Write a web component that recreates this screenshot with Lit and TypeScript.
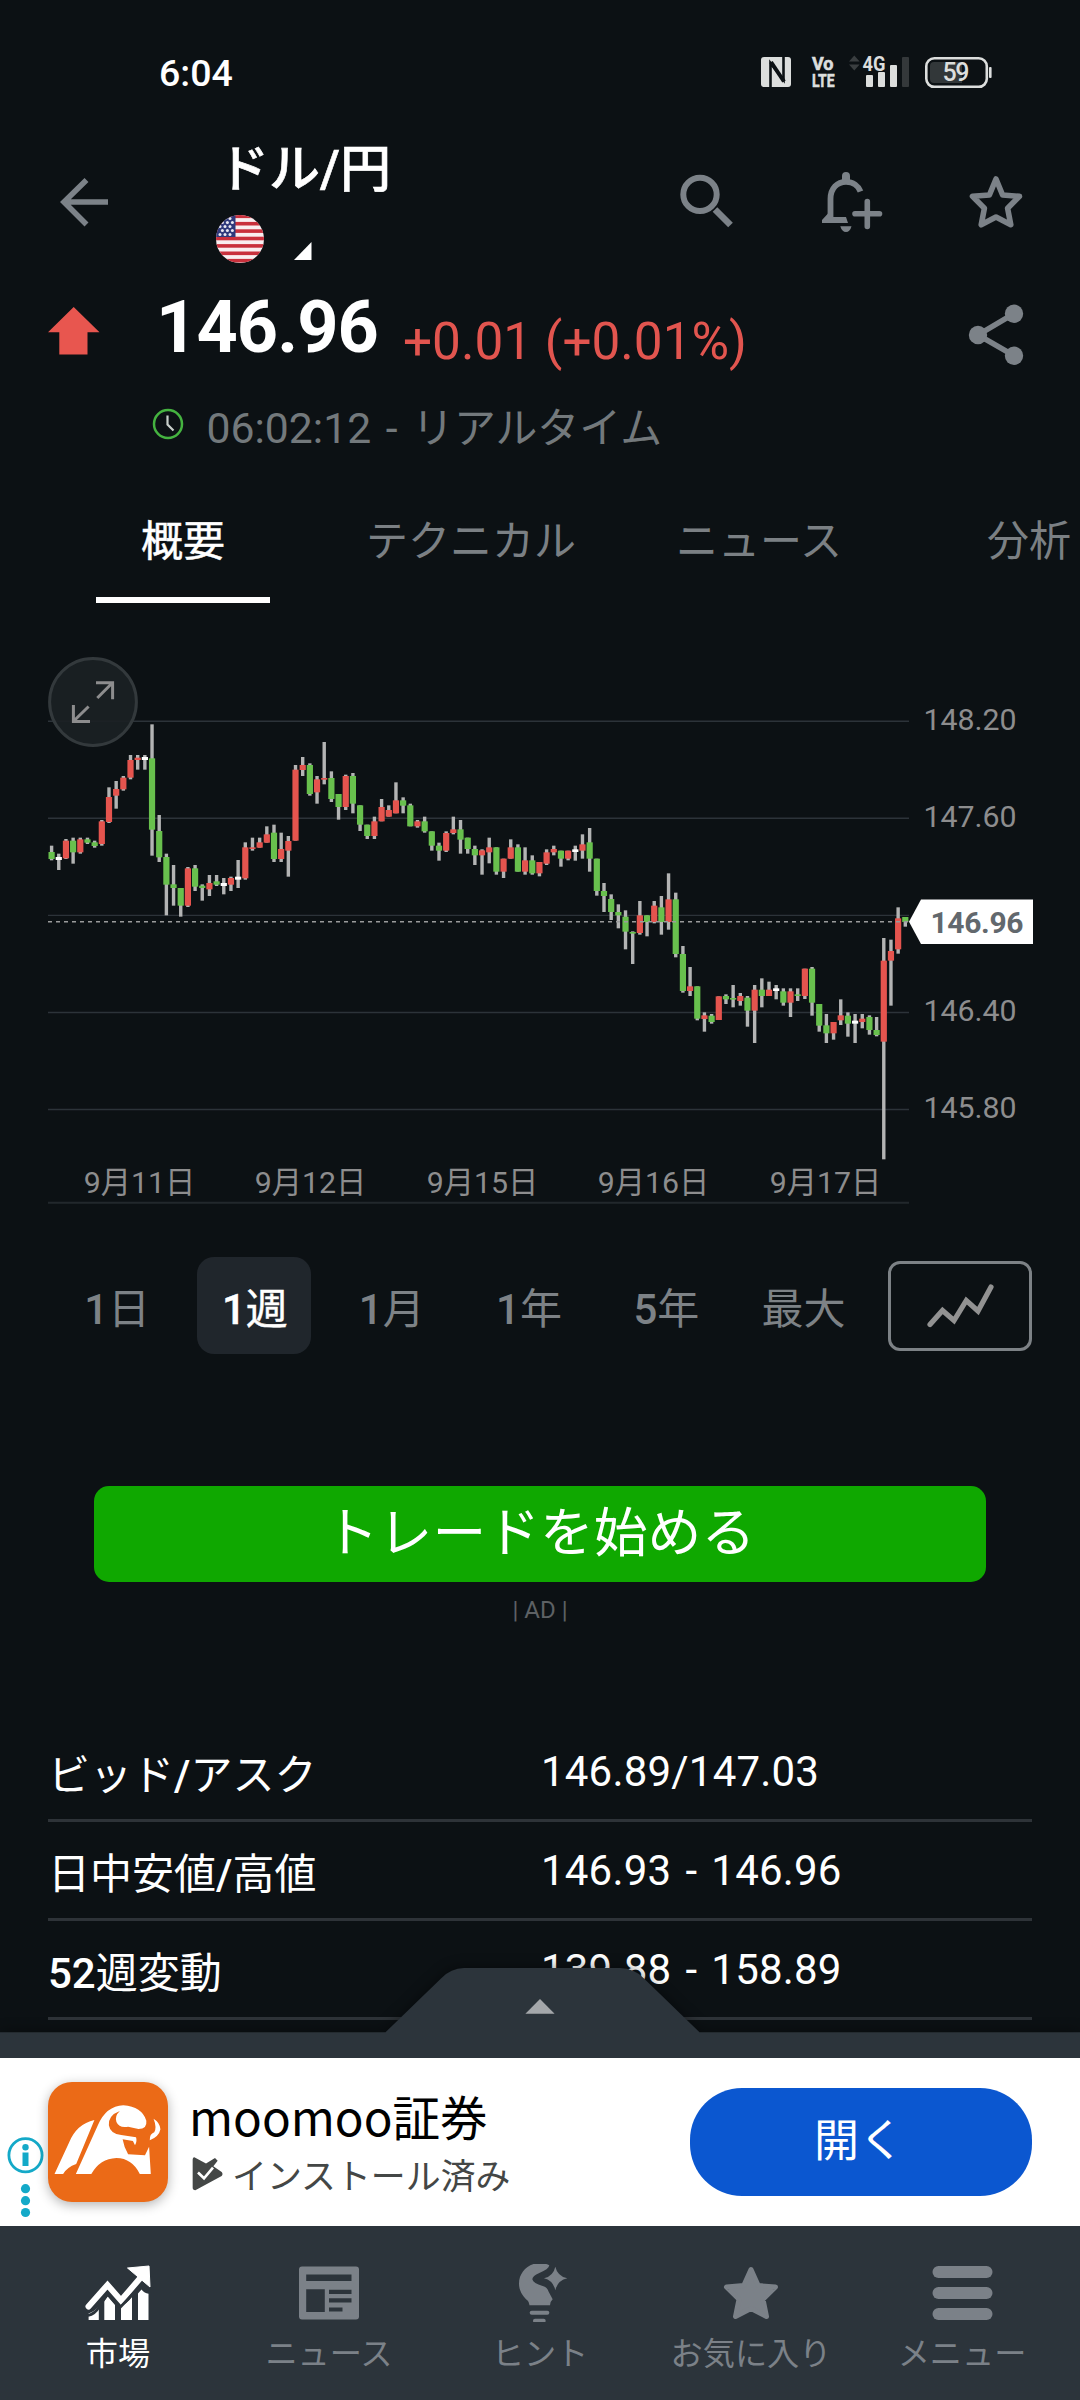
import { LitElement, html, svg, css } from "lit";
import { customElement } from "lit/decorators.js";
import { classMap } from "lit/directives/class-map.js";

type Kind = "u" | "d" | "n";

// Each candle: high, open/close top, open/close bottom, low, kind.
// Levels are in thirds of a pixel below the session's base line.
const SESSIONS: { base: number; data: string }[] = [
  {
    base: 640,
    data: `617,636,657,661,d 641,651,660,690,n 597,602,655,657,u 593,602,637,671,d 593,598,637,641,u
593,598,608,612,d 602,607,618,623,d 540,544,612,617,u 442,471,546,549,u 423,447,467,506,u
408,413,448,452,u 345,360,413,418,u 345,353,360,389,u 345,351,360,389,n 253,355,569,647,d
525,573,652,666,d 641,651,734,826,d 675,733,744,797,d 744,744,797,830,d 681,685,797,801,u
675,685,740,753,d 733,737,744,782,d 705,729,748,768,u 705,724,734,738,d 714,729,738,763,n
710,714,734,753,u 660,710,719,744,n 607,622,715,719,u 593,622,626,632,u 593,607,623,623,u
559,583,608,608,u 554,578,657,666,d 578,627,657,666,u 588,603,632,710,u 375,389,602,602,u`,
  },
  {
    base: 720,
    data: `111,135,150,168,u 130,135,222,227,d 168,178,217,251,u 66,174,179,193,u 154,174,237,246,d
222,222,261,299,d 164,168,261,270,u 159,168,251,280,d 256,256,314,333,d 314,314,348,357,d
290,304,348,357,u 237,261,304,304,u 256,270,290,290,u 187,241,280,280,u 232,241,257,280,d
251,256,319,319,d 300,304,319,323,u 290,304,334,338,d 334,334,377,392,d 368,377,392,422,d
334,339,392,396,u 290,328,339,343,u 300,328,359,401,d 353,353,387,401,d 377,387,406,435,d
388,391,406,464,u 353,382,397,430,u 382,382,455,464,d 416,416,455,474,u 358,382,416,416,u
373,382,455,455,d 382,421,455,464,u 406,421,460,464,d 426,426,460,469,u 388,397,431,435,u
377,387,397,406,u 392,392,416,440,d 392,392,416,421,u 377,388,396,422,n 343,373,392,416,u
324,367,416,455,d 416,416,513,527,d`,
  },
  {
    base: 780,
    data: `309,333,348,396,d 343,357,396,420,d 373,396,406,445,d 391,410,455,508,d 454,456,460,552,d
363,406,459,464,u 406,406,426,469,d 363,377,426,430,u 348,382,426,464,d 280,358,426,449,u
338,358,522,532,d 498,522,633,638,d 561,619,633,648,u 619,619,716,721,d 697,706,717,755,u
702,707,726,731,d 649,649,720,720,u 643,648,658,672,d 615,654,658,682,d 639,648,663,677,u
648,653,692,740,d 615,629,692,789,u 595,629,648,682,d 605,629,648,648,u 615,625,633,658,n
625,634,668,677,d 625,634,668,711,u 625,643,648,663,d 566,566,648,657,u 561,566,668,707,d
672,672,737,755,d 702,736,760,789,d 726,726,760,779,u 658,706,721,735,u 697,707,731,770,d
702,722,731,789,n 702,716,726,745,u 706,711,750,764,d 711,750,765,769,d 474,542,785,1138,u
479,513,542,677,u 382,415,508,521,u 411,411,426,440,d`,
  },
];

interface Candle { high: number; top: number; bottom: number; low: number; kind: Kind }

const CANDLES: Candle[] = SESSIONS.flatMap(({ base, data }) =>
  data.trim().split(/\s+/).map((row) => {
    const p = row.split(",");
    const [high, top, bottom, low] = p.slice(0, 4).map((v) => base + Number(v) / 3);
    return { high, top, bottom, low, kind: p[4] as Kind };
  })
);

const FIRST_X = 51.6;
const STEP = 7.174;
const FILL: Record<Kind, string> = { u: "#e5544e", d: "#68c04d", n: "#ffffff" };

@customElement("price-chart")
export class PriceChart extends LitElement {
  static styles = css`
    :host { display: block; }
    .chart { display: block; width: 1080px; height: 617px; font-family: Roboto, "Noto Sans CJK JP", sans-serif; }
    .axis { font-size: 30.3px; fill: #8d8d8e; }
    .now { font-size: 30px; font-weight: 700; fill: #62686d; }
  `;
  render() {
    const grid = [721.3, 818.3, 915.4, 1012.5, 1109.5];
    const prices: [string, number][] = [["148.20", 730], ["147.60", 827], ["146.40", 1021], ["145.80", 1118]];
    const dates: [string, number][] = [["9月11日", 139.5], ["9月12日", 310.5], ["9月15日", 482.5], ["9月16日", 653.5], ["9月17日", 825.5]];
    return html`<svg class="chart" viewBox="0 603 1080 617">
      ${grid.map((y) => svg`<line x1="48" x2="909" y1=${y} y2=${y} stroke="#2c3339" stroke-width="1.4"/>`)}
      <line x1="48" x2="909" y1="1202.8" y2="1202.8" stroke="#22282c" stroke-width="2"/>
      ${CANDLES.map((c, i) => {
        const x = FIRST_X + i * STEP;
        return svg`<rect x=${x - 1.7} y=${c.high} width="3.4" height=${c.low - c.high} fill="#b3b4b4"/>
          <rect x=${x - 3.1} y=${c.top} width="6.2" height=${Math.max(c.bottom - c.top, 1.6)} fill=${FILL[c.kind]}/>`;
      })}
      <line x1="48" x2="909" y1="921.8" y2="921.8" stroke="#9a9b9b" stroke-width="1.4" stroke-dasharray="4 4"/>
      <path d="M909 921.8L921 899.6H1033V944H921z" fill="#fff"/>
      <text class="now" x="930.5" y="933" textLength="93">146.96</text>
      ${prices.map(([t, y]) => svg`<text class="axis" x="923.5" y=${y}>${t}</text>`)}
      ${dates.map(([t, x]) => svg`<text class="axis" x=${x} y="1193" text-anchor="middle">${t}</text>`)}
      <circle cx="93" cy="702" r="43.4" fill="#1b2024" fill-opacity="0.93" stroke="#33393c" stroke-width="3"/>
      <path d="M96 682.7H112.6V699.2M112 683.3L97.3 698M73.4 705V721.4H90M74 720.8L88.6 706.5" fill="none" stroke="#8d8d8e" stroke-width="3"/>
    </svg>`;
  }
}

const NAV = [
  {
    label: "市場",
    box: "85 2264 66 58",
    icon: svg`<path d="M88.6 2320v-6.5q6-2 10.2-7.500v14zM104.300 2320v-19l3.500-4.500 7.200 8.500v15zM121 2320v-14q6-2.500 11-9v23zM138 2320v-26.500l3.500-4q3 4 7 4.200v26.300z" fill="currentColor"/>
      <path d="M88.500 2306.500L107.500 2285 121 2300.500 142 2276" fill="none" stroke="currentColor" stroke-width="6" stroke-linecap="round" stroke-linejoin="miter"/>
      <path d="M127.500 2268L149 2266 150 2287z" fill="currentColor" stroke="currentColor" stroke-width="1" stroke-linejoin="round"/>
      <path d="M88 2315.500Q95 2314 99 2307L107.500 2294 120 2307.500 142 2284.500 149 2291" fill="none" stroke="#2c343b" stroke-width="2.600"/>`,
  },
  {
    label: "ニュース",
    box: "296 2264 66 58",
    icon: svg`<path fill-rule="evenodd" d="M302 2266.600h54q3 0 3 3v46.800q0 3-3 3h-54q-3 0-3-3v-46.800q0-3 3-3zM306.200 2274.500v6.600h45.300v-6.600zM306.200 2289.300v22.600h18.600v-22.600zM329 2289.700v4.200h22.500v-4.200zM329 2298.300v4.200h22.500v-4.200zM329 2307.400v4.200h13.500v-4.200z" fill="currentColor"/>`,
  },
  {
    label: "ヒント",
    box: "507 2264 66 58",
    icon: svg`<g transform="translate(490 2240) scale(.3333)" fill="currentColor">
      <path d="M178 76Q165 69 147 69C112 71 87 98 87 131C87 154 101 172 112 181Q119 188 118 196H180Q181 184 188 178L176 155Q172 142 158 138Q130 130 127 118Q127 108 148 99Q176 88 178 76z"/>
      <path d="M196 80Q202 108 232 115Q202 122 196 151Q190 122 162 115Q190 108 196 80z"/>
      <rect x="119" y="212" width="59" height="12" rx="6"/><rect x="129" y="236" width="38" height="12" rx="6"/></g>`,
  },
  {
    label: "お気に入り",
    box: "718 2264 66 58",
    icon: svg`<path d="M751 2269.500L758.200 2285.600 775.500 2287 763 2299.300 766.500 2316.500 751 2308.500 735.500 2316.500 739 2299.300 726.500 2287 743.800 2285.600z" fill="currentColor" stroke="currentColor" stroke-width="5" stroke-linejoin="round"/>`,
  },
  {
    label: "メニュー",
    box: "929.500 2264 66 58",
    icon: svg`<g fill="currentColor"><rect x="933" y="2266" width="60" height="12" rx="6"/><rect x="933" y="2287" width="60" height="12" rx="6"/><rect x="933" y="2308" width="60" height="12" rx="6"/></g>`,
  },
];

// Latin digits and slashes take the medium weight; kana and kanji stay regular.
const mixed = (text: string) =>
  text.split(/([0-9/]+)/).filter(Boolean).map((part) => (/[0-9/]/.test(part) ? html`<span class="latin">${part}</span>` : part));

@customElement("app-root")
export class AppRoot extends LitElement {
  static styles = css`
    :host { display: block; }
    * { box-sizing: border-box; }
    .page { position: relative; width: 1080px; height: 2400px; overflow: hidden; background: #0c1114; color: #fff; font-family: Roboto, "Noto Sans CJK JP", sans-serif; display: flex; flex-direction: column; }
    svg { display: block; flex: none; }
    .latin { font-weight: 500; }
    .status { height: 112px; flex: none; display: flex; justify-content: space-between; padding: 50px 84px 0 159px; }
    .clock { font-size: 37.5px; line-height: 40px; font-weight: 500; padding-top: 3px; }
    .volte { font-size: 18px; font-weight: 700; fill: #dcdedd; stroke: #dcdedd; stroke-width: 0.6px; }
    .net { font-size: 20.5px; font-weight: 700; fill: #dcdedd; }
    .charge { font-size: 25px; font-weight: 500; fill: #dcdedd; }
    .header { height: 176px; flex: none; display: flex; padding-left: 57px; color: #7c8288; }
    .back { margin-top: 62px; }
    .titles { margin-left: 103px; width: 420px; padding-top: 27.5px; color: #fff; }
    .title { font-size: 51px; line-height: 60px; font-weight: 500; padding-left: 4px; -webkit-text-stroke: 0.6px #fff; }
    .sub { display: flex; align-items: flex-start; gap: 30px; margin-top: 15.5px; padding-left: 2px; }
    .tri { margin-top: 27px; }
    .tools { margin: 56px 0 0 44px; }
    .quote { height: 196px; flex: none; display: flex; padding-left: 48px; }
    .up { margin-top: 19px; }
    .figures { flex: 1; padding-left: 54px; }
    .line { display: flex; align-items: flex-start; }
    .price { font-size: 72px; line-height: 80px; font-weight: 700; letter-spacing: -0.9px; padding-left: 2px; width: 249px; }
    .change { font-size: 51.3px; line-height: 60px; padding-top: 24px; color: #e2554f; white-space: nowrap; }
    .time { display: flex; align-items: flex-start; margin-top: 30px; gap: 21.500px; color: #73797c; font-size: 42.700px; line-height: 50px; white-space: pre; word-spacing: 4px; }
    .hands { margin: 5px 0 0 -3px; }
    .stamp { padding-top: 1px; }
    .feed { font-size: 41.9px; }
    .share { margin: 13px 54px 0 0; }
    .tabs { height: 119px; flex: none; display: flex; white-space: nowrap; padding-left: 96px; color: #7b8084; font-size: 42px; line-height: 50px; overflow: hidden; }
    .tab { flex: none; padding: 33px 45px 0; }
    .tab + .tab { margin-left: 51px; }
    .tab + .tab + .tab { margin-left: 10px; }
    .tab + .tab + .tab + .tab { margin-left: 55px; }
    .tab.on { color: #fff; border-bottom: 6px solid #fff; -webkit-text-stroke: 0.5px #fff; }
    .ranges { flex: none; margin-top: 37px; height: 97px; display: flex; align-items: center; padding: 0 48px; font-size: 42px; color: #7d8286; }
    .cell { width: 137.3px; display: flex; justify-content: center; }
    .pill { width: 114px; height: 97px; border-radius: 17px; text-align: center; line-height: 105px; white-space: nowrap; padding-left: 1px; }
    .pill.on { background: #20262c; color: #fff; padding-left: 2px; -webkit-text-stroke: 0.4px #fff; }
    .kind { margin-left: 16px; width: 144px; height: 90px; border: 3px solid #7d8286; border-radius: 12px; }
    .cta { flex: none; margin: 132px 94px 0; height: 96px; border-radius: 15px; background: #0fa800; text-align: center; font-size: 53.8px; line-height: 96px; }
    .ad { flex: none; margin-top: 13px; text-align: center; font-size: 24px; line-height: 30px; color: #5d6164; }
    .stats { margin: 98px 48px 0; }
    .row { height: 99px; border-bottom: 3px solid #2e3338; display: flex; font-size: 42px; line-height: 50px; }
    .name { width: 493px; padding-top: 27.500px; }
    .value { padding-top: 23.500px; letter-spacing: 0.2px; word-spacing: 3.500px; }
    .dock { position: absolute; left: 0; right: 0; bottom: 0; height: 442px; display: flex; flex-direction: column; }
    .handle { filter: drop-shadow(0 0 7px rgba(0, 0, 0, 0.45)); }
    .banner { position: relative; height: 168px; flex: none; background: #fff; display: flex; align-items: flex-start; color: #000; padding-left: 6px; }
    .info { margin-top: 76px; }
    .app { margin: 24px 0 0 3px; width: 120px; height: 120px; border-radius: 24px; box-shadow: 0 3px 12px rgba(0, 0, 0, 0.3); background: #eb6a17; }
    .copy { margin-left: 20px; width: 502px; padding-top: 28px; font-family: "Noto Sans CJK JP", sans-serif; }
    .brand { font-size: 47.600px; line-height: 60px; padding-left: 1px; }
    .done { display: flex; align-items: center; gap: 9px; font-size: 34.900px; line-height: 46px; color: #444746; padding-left: 4px; margin-top: 5px; }
    .open { margin-top: 30px; width: 342px; height: 108px; border-radius: 52px; background: #0b57d0; color: #fff; text-align: center; font-size: 45px; line-height: 107px; padding-right: 4px; }
    .nav { flex: 1; position: relative; background: #2c343b; display: flex; padding: 38px 12.500px 0; color: #7b8188; }
    .item { width: 211px; display: flex; flex-direction: column; align-items: center; font-size: 32.200px; line-height: 44px; gap: 10px; white-space: nowrap; }
    .item.on { color: #fff; }
  `;

  render() {
    const tabs = ["概要", "テクニカル", "ニュース", "分析"];
    const ranges = ["1日", "1週", "1月", "1年", "5年", "最大"];
    const stats = [["ビッド/アスク", "146.89/147.03"], ["日中安値/高値", "146.93 - 146.96"], ["52週変動", "139.88 - 158.89"]];
    return html`<div class="page">
      <div class="status">
        <div class="clock">6:04</div>
        <svg width="240" height="44" viewBox="756 50 240 44">
          <rect x="761" y="57" width="30" height="30" rx="3" fill="#dcdedd"/>
          <path d="M770.500 87V63L783.500 80V57" fill="none" stroke="#0c1114" stroke-width="2.600"/>
          <path d="M771 62L784 81.500" stroke="#0c1114" stroke-width="4"/>
          <text class="volte" x="812" y="70" textLength="21.500" lengthAdjust="spacingAndGlyphs">Vo</text>
          <text class="volte" x="812" y="87" textLength="22.500" lengthAdjust="spacingAndGlyphs">LTE</text>
          <path d="M849 61.500L854.300 55.500 859.600 61.500zM849 64.500H859.600L854.300 70.500z" fill="#3a3e40"/>
          <text class="net" x="862.500" y="70.500" textLength="23" lengthAdjust="spacingAndGlyphs">4G</text>
          <rect x="866" y="75" width="7" height="12" rx="1" fill="#dcdedd"/><rect x="878" y="72" width="7" height="15" rx="1" fill="#dcdedd"/>
          <rect x="890" y="65" width="7" height="22" rx="1" fill="#dcdedd"/><rect x="902" y="57" width="7" height="30" rx="1" fill="#34383a"/>
          <rect x="926.300" y="58.300" width="60.500" height="28.500" rx="8" fill="none" stroke="#dcdedd" stroke-width="2.600"/>
          <path d="M934 62H962V83H934Q930 83 930 79V66Q930 62 934 62z" fill="#323739"/>
          <rect x="989" y="67" width="2.600" height="11" rx="1" fill="#dcdedd"/>
          <text class="charge" x="942.500" y="81.300" textLength="27">59</text>
        </svg>
      </div>
      <div class="header">
        <svg class="back" width="54" height="56" viewBox="57 174 54 56"><path d="M108 202H64M86.500 180L64 202 86.500 224.500" fill="none" stroke="currentColor" stroke-width="5.600"/></svg>
        <div class="titles">
          <div class="title">ドル/円</div>
          <div class="sub">
            <svg width="48" height="48" viewBox="0 0 48 48">
              <defs><clipPath id="disc"><circle cx="24" cy="24" r="24"/></clipPath></defs>
              <g clip-path="url(#disc)"><rect width="48" height="48" fill="#f9eef0"/>
              ${[0, 1, 2, 3, 4, 5, 6].map((i) => svg`<rect y=${-0.5 + i * 7.4} width="48" height="3.600" fill="#c9303c"/>`)}
              <rect width="19.500" height="22" fill="#2f3a7c"/>
              ${[0, 1, 2, 3, 4].flatMap((r) => [0, 1, 2].map((c) => svg`<circle cx=${4 + c * 5 + (r % 2) * 2.4} cy=${3.6 + r * 4} r="1.500" fill="#e8e8f2"/>`))}
              </g>
            </svg>
            <svg class="tri" width="18" height="18" viewBox="0 0 18 18"><path d="M0 18H17.500V0z" fill="#fff"/></svg>
          </div>
        </div>
        <svg class="tools" width="350" height="68" viewBox="678 168 350 68">
          <g fill="none" stroke="currentColor">
            <circle cx="700" cy="194.400" r="16.700" stroke-width="6"/>
            <path d="M715 209.500L730.500 225" stroke-width="6.500"/>
            <path d="M830.500 220V199C830.500 188 837.500 181.800 846 181.800C853 181.800 858.500 186 860.500 191.500" stroke-width="5.800"/>
            <path d="M867.300 201.500V226.500M855 213.800H879.500" stroke-width="5.600" stroke-linecap="round"/>
            <path d="M996 179L1002.600 195 1019.500 196.300 1007.600 208.300 1010.800 224.800 996 217 981.200 224.800 984.400 208.300 972.500 196.300 989.400 195z" stroke-width="5.600" stroke-linejoin="round"/>
          </g>
          <path d="M842 183V176Q842 172 846 172T850 176V183zM822 223V220L828 213.500 833 217H846L848 223zM840.300 226.200H851.500Q850 232 846 232T840.300 226.200z" fill="currentColor"/>
        </svg>
      </div>
      <div class="quote">
        <svg class="up" width="52" height="49" viewBox="48 307 52 49"><path d="M73.700 307L99.500 332.300H87.500V354.500H59.300V332.300H48z" fill="#e8564f"/></svg>
        <div class="figures">
          <div class="line"><div class="price">146.96</div><div class="change">+0.01 (+0.01%)</div></div>
          <div class="time"><svg class="hands" width="34" height="34" viewBox="151 406 34 34"><circle cx="168" cy="423" r="14" fill="none" stroke="#45b340" stroke-width="2.500"/><path d="M167.500 414.500V423.500L173.500 429.500" fill="none" stroke="#c9cfcb" stroke-width="2.200"/></svg><span class="stamp">06:02:12 - <span class="feed">リアルタイム</span></span></div>
        </div>
        <svg class="share" width="60" height="66" viewBox="966 301 60 66" color="#7c8288"><path d="M1014 313.700L978 335 1014 355.700" fill="none" stroke="currentColor" stroke-width="5.500"/><g fill="currentColor"><circle cx="1014" cy="313.700" r="9.200"/><circle cx="978" cy="335" r="9.200"/><circle cx="1014" cy="355.700" r="9.200"/></g></svg>
      </div>
      <div class="tabs">${tabs.map((t, i) => html`<div class=${classMap({ tab: true, on: i === 0 })}>${t}</div>`)}</div>
      <price-chart></price-chart>
      <div class="ranges">
        ${ranges.map((r, i) => html`<div class="cell"><div class=${classMap({ pill: true, on: i === 1 })}>${mixed(r)}</div></div>`)}
        <div class="kind"><svg width="138" height="84" viewBox="891 1264 138 84"><path d="M930 1324.500L942.500 1310.500 954 1320.500 966.300 1300.500 978 1311 991 1287" fill="none" stroke="#929292" stroke-width="5.200" stroke-linecap="round"/></svg></div>
      </div>
      <div class="cta">トレードを始める</div>
      <div class="ad">| AD |</div>
      <div class="stats">${stats.map(([n, v]) => html`<div class="row"><div class="name">${mixed(n)}</div><div class="value">${v}</div></div>`)}</div>

      <div class="dock">
        <svg class="handle" width="1080" height="100" viewBox="0 1958 1080 100">
          <path d="M0 2032.300H385.500L441 1978.500Q451 1968 464 1968H620Q634 1968 644 1978.500L699.500 2032.300H1080V2058H0z" fill="#2c343b"/>
          <path d="M540 1999L554.600 2013.700H525.400z" fill="#a4a7aa"/>
        </svg>
        <div class="banner">
          <svg class="info" width="39" height="86" viewBox="6 2134 39 86"><circle cx="25.500" cy="2155.300" r="16.600" fill="none" stroke="#14a9c8" stroke-width="2.800"/>
            <g fill="#14a9c8"><circle cx="25.500" cy="2147.300" r="3.200"/><path d="M22.500 2152.500H28.500V2166H22.500z"/><circle cx="25.500" cy="2188.700" r="4.600"/><circle cx="25.500" cy="2200.700" r="4.600"/><circle cx="25.500" cy="2212.500" r="4.600"/></g></svg>
          <svg class="app" viewBox="139 246 349 360" preserveAspectRatio="none">
            <g fill="#fff">
              <path d="M158 522L200 428Q222 372 274 360L221 492Q194 502 183 522z"/>
              <path d="M220 522L284 376Q308 318 358 316Q412 320 425 362Q428 387 402 387L372 380Q346 385 338 366Q332 348 348 333Q314 346 316 376Q320 402 352 405L395 412Q399 424 392 436L386 423L356 418Q360 442 372 463L421 466L433 440L438 522H406Q384 475 338 474Q290 476 265 522z"/>
              <path d="M446 356Q465 368 466 388Q462 410 435 421Q434 402 448 397Q456 382 446 356z"/>
            </g>
          </svg>
          <div class="copy">
            <div class="brand">moomoo証券</div>
            <div class="done"><svg width="31" height="34" viewBox="556 467 93 99" preserveAspectRatio="none"><path d="M563 468L598 486 625 470 633 478 620 494 645 511Q650 517 645 522L566 564Q558 564 558 556V474Q558 468 563 468z" fill="#444746"/><path d="M574 512L592 529 619 498" fill="none" stroke="#fff" stroke-width="8"/></svg><span>インストール済み</span></div>
          </div>
          <div class="open">開く</div>
        </div>
        <div class="nav">${NAV.map((n, i) => html`<div class=${classMap({ item: true, on: i === 0 })}><svg width="66" height="58" viewBox=${n.box}>${n.icon}</svg><span>${n.label}</span></div>`)}</div>
      </div>
    </div>`;
  }
}
